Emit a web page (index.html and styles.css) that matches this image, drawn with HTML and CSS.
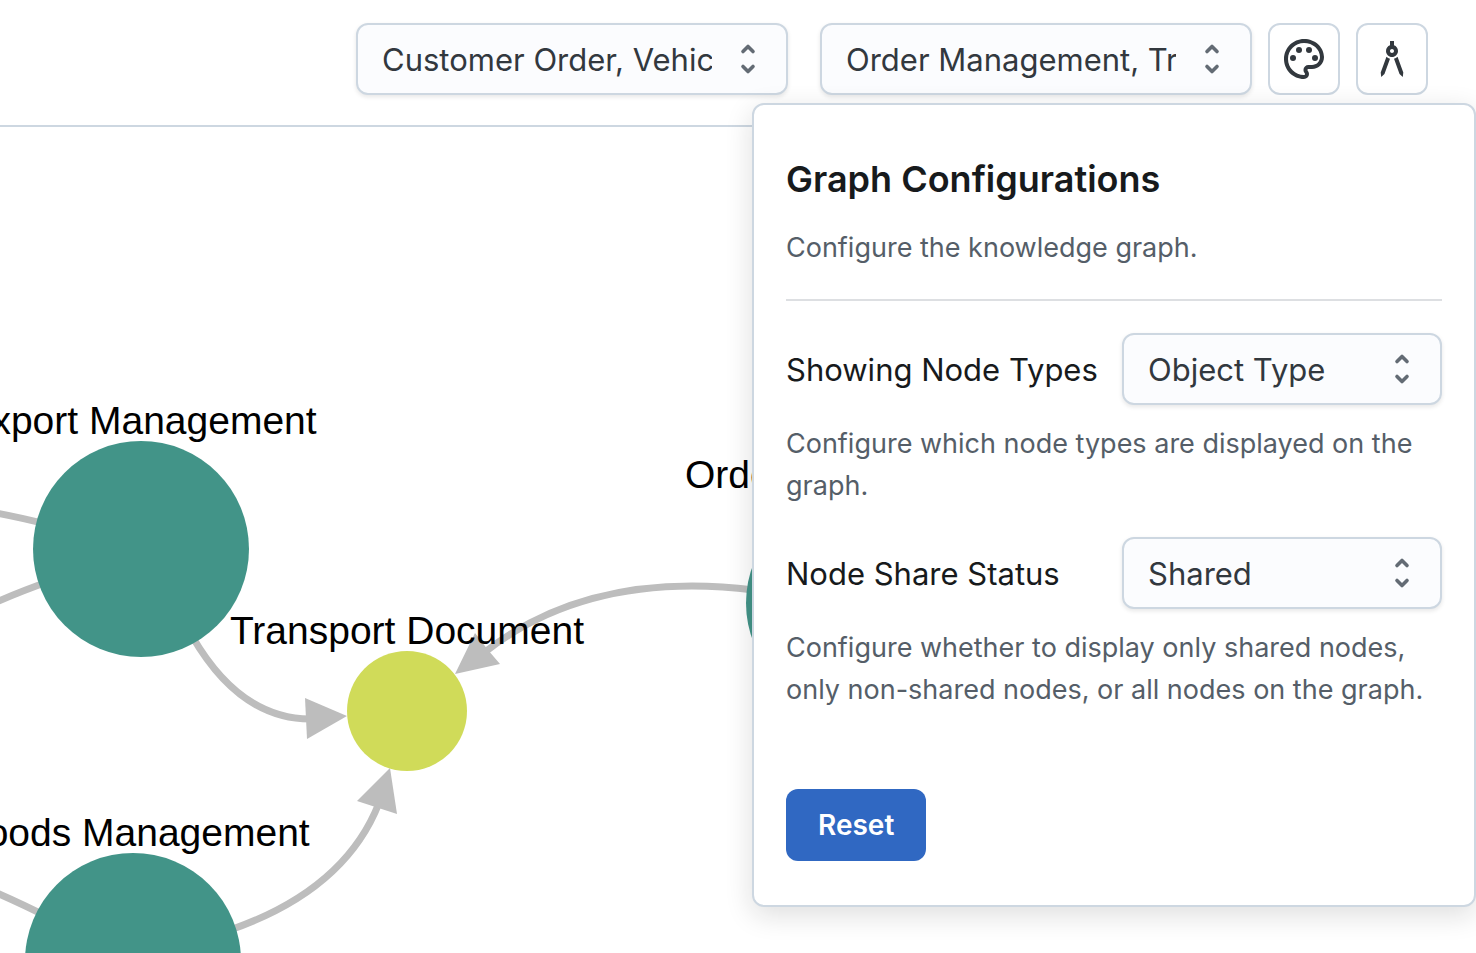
FILE: index.html
```html
<!DOCTYPE html>
<html lang="en">
<head>
<meta charset="utf-8">
<meta name="viewport" content="width=device-width, initial-scale=1">
<title>Knowledge Graph</title>
<link rel="stylesheet" href="styles.css">
</head>
<body>
<svg class="sprite" aria-hidden="true">
  <symbol id="selector" viewBox="0 0 32 32">
    <path d="M11 8.500l5-5 5 5M11 23.500l5 5 5-5" fill="none" stroke="currentColor" stroke-width="3.600" stroke-linecap="round" stroke-linejoin="round"/>
  </symbol>
</svg>

<header class="toolbar">
  <div class="select select-wide">
    <select class="select-input" aria-label="Object types">
      <option>Customer Order, Vehicle, Container</option>
    </select>
    <svg class="select-icon" aria-hidden="true"><use href="#selector"/></svg>
  </div>
  <div class="toolbar-group">
    <div class="select select-wide">
      <select class="select-input" aria-label="Processes">
        <option>Order Management, Transport</option>
      </select>
      <svg class="select-icon" aria-hidden="true"><use href="#selector"/></svg>
    </div>
    <button class="icon-button" type="button" aria-label="Colors">
      <svg class="icon" viewBox="0 0 24 24" aria-hidden="true">
        <path d="M12 22C6.490 22 2 17.510 2 12S6.490 2 12 2s10 4.040 10 9c0 3.310-2.690 6-6 6h-1.770c-.28 0-.5.22-.5.5 0 .12.05.23.13.33.41.47.64 1.060.64 1.670A2.500 2.500 0 0 1 12 22zm0-18c-4.410 0-8 3.590-8 8s3.590 8 8 8c.28 0 .5-.22.5-.5a.54.54 0 0 0-.14-.35c-.41-.46-.63-1.050-.63-1.650a2.500 2.500 0 0 1 2.500-2.500H16c2.210 0 4-1.790 4-4 0-3.860-3.590-7-8-7z"/>
        <circle cx="6.500" cy="11.500" r="1.500"/><circle cx="9.500" cy="7.500" r="1.500"/><circle cx="14.500" cy="7.500" r="1.500"/><circle cx="17.500" cy="11.500" r="1.500"/>
      </svg>
    </button>
    <button class="icon-button" type="button" aria-label="Graph configurations" aria-expanded="true" aria-controls="graph-config">
      <svg class="icon" viewBox="0 0 24 24" aria-hidden="true">
        <path d="M6.360 18.780L6.610 21l1.620-1.540 2.770-7.600c-.68-.17-1.280-.51-1.770-.98l-2.870 7.900zM14.770 10.880c-.49.47-1.100.81-1.770.98l2.770 7.600L17.390 21l.26-2.220-2.880-7.900zM15 8c0-1.300-.84-2.400-2-2.820V3h-2v2.180C9.840 5.600 9 6.700 9 8c0 1.660 1.340 3 3 3s3-1.340 3-3zm-3 1c-.55 0-1-.45-1-1s.45-1 1-1 1 .45 1 1-.45 1-1 1z"/>
      </svg>
    </button>
  </div>
</header>

<main class="canvas">
  <svg class="graph" viewBox="0 127 1476 826" preserveAspectRatio="xMinYMin slice" role="img" aria-label="Knowledge graph">
    <g class="edges">
      <path d="M-10 512Q14 516 50 525"/>
      <path d="M-10 605Q16 593 50 581"/>
      <path d="M-10 890Q16 901 50 918"/>
      <path d="M192 636Q240 719 310 719"/>
      <path d="M754 590Q590 570 485 652"/>
      <path d="M230 930Q345 890 379 803"/>
    </g>
    <g class="arrows">
      <path d="M347 716L305 698L307 739Z"/>
      <path d="M455 674L475 633L488 650L500 664Z"/>
      <path d="M390 768L357 801L397 814Z"/>
    </g>
    <g class="process">
      <circle cx="141" cy="549" r="108"/>
      <circle cx="133" cy="961" r="108"/>
      <circle cx="854" cy="603" r="108"/>
    </g>
    <circle class="object" cx="407" cy="711" r="60"/>
    <g class="labels">
      <text x="141" y="434">Export Management</text>
      <text x="407" y="644">Transport Document</text>
      <text x="133" y="846">Goods Management</text>
      <text x="854" y="488">Order Management</text>
    </g>
  </svg>
</main>

<section class="panel" id="graph-config" aria-labelledby="panel-title">
  <h2 class="panel-title" id="panel-title">Graph Configurations</h2>
  <p class="hint panel-intro">Configure the knowledge graph.</p>
  <hr class="divider">
  <div class="field">
    <div class="field-row">
      <label class="field-label" for="node-types">Showing Node Types</label>
      <div class="select select-field">
        <select class="select-input" id="node-types"><option>Object Type</option></select>
        <svg class="select-icon" aria-hidden="true"><use href="#selector"/></svg>
      </div>
    </div>
    <p class="hint">Configure which node types are displayed on the graph.</p>
  </div>
  <div class="field">
    <div class="field-row">
      <label class="field-label" for="share-status">Node Share Status</label>
      <div class="select select-field">
        <select class="select-input" id="share-status"><option>Shared</option></select>
        <svg class="select-icon" aria-hidden="true"><use href="#selector"/></svg>
      </div>
    </div>
    <p class="hint">Configure whether to display only shared nodes, only non-shared nodes, or all nodes on the graph.</p>
  </div>
  <button class="reset" type="button">Reset</button>
</section>
</body>
</html>
```
FILE: styles.css
```css
* {
  box-sizing: border-box;
}

body {
  margin: 0;
  position: relative;
  min-height: 100vh;
  display: flex;
  flex-direction: column;
  overflow: hidden;
  background: #fff;
  color: #171a1c;
  font-family: Inter, "Liberation Sans", sans-serif;
}

.sprite {
  position: absolute;
  width: 0;
  height: 0;
}

.toolbar {
  display: flex;
  justify-content: flex-end;
  gap: 32px;
  padding: 23px 48px 30px;
  border-bottom: 2px solid #cdd7e1;
}

.toolbar-group {
  display: flex;
  gap: 16px;
}

.select {
  position: relative;
  height: 72px;
}

.select-wide {
  width: 432px;
}

.select-field {
  width: 320px;
}

.select-input {
  appearance: none;
  width: 100%;
  height: 100%;
  margin: 0;
  padding: 2px 74px 0 24px;
  border: 2px solid #cdd7e1;
  border-radius: 12px;
  background: #fbfcfe;
  box-shadow: 0 2px 4px rgba(21, 21, 21, 0.1);
  color: #32383e;
  font-family: inherit;
  font-size: 31px;
  line-height: 48px;
}

.select-icon {
  position: absolute;
  top: 20px;
  right: 24px;
  width: 32px;
  height: 32px;
  color: #636b74;
  pointer-events: none;
}

.icon-button {
  display: flex;
  align-items: center;
  justify-content: center;
  width: 72px;
  height: 72px;
  padding: 0;
  border: 2px solid #cdd7e1;
  border-radius: 12px;
  background: #fff;
  color: #32383e;
}

.icon {
  width: 48px;
  height: 48px;
  fill: currentColor;
}

.canvas {
  flex: 1;
  min-height: 0;
  display: flex;
}

.graph {
  flex: 1;
  min-width: 0;
}

.edges {
  fill: none;
  stroke: #bdbdbd;
  stroke-width: 7;
}

.arrows {
  fill: #bdbdbd;
}

.process {
  fill: #429488;
}

.object {
  fill: #d0db59;
}

.labels {
  fill: #000;
  font-family: "Liberation Sans", Arial, sans-serif;
  font-size: 39px;
  text-anchor: middle;
}

.panel {
  position: absolute;
  top: 103px;
  right: 0;
  width: 724px;
  padding: 50px 32px 44px;
  border: 2px solid #cdd7e1;
  border-radius: 12px;
  background: #fff;
  box-shadow: 0 8px 28px rgba(21, 21, 21, 0.14);
}

.panel-title {
  margin: 0;
  font-size: 36px;
  font-weight: 600;
  line-height: 48px;
}

.hint {
  margin: 18px 0 0;
  color: #555e68;
  font-size: 27px;
  line-height: 42px;
}

.panel-intro {
  margin-top: 24px;
}

.divider {
  height: 2px;
  margin: 30px 0 32px;
  border: 0;
  background: #dddfe2;
}

.field {
  margin-bottom: 30px;
}

.field-row {
  display: flex;
  align-items: center;
  justify-content: space-between;
}

.field-label {
  padding-top: 2px;
  font-size: 31px;
  line-height: 48px;
}

.reset {
  height: 72px;
  margin-top: 48px;
  padding: 0 32px;
  border: 0;
  border-radius: 12px;
  background: #3068c2;
  color: #fff;
  font-family: inherit;
  font-size: 28px;
  font-weight: 600;
}
```
